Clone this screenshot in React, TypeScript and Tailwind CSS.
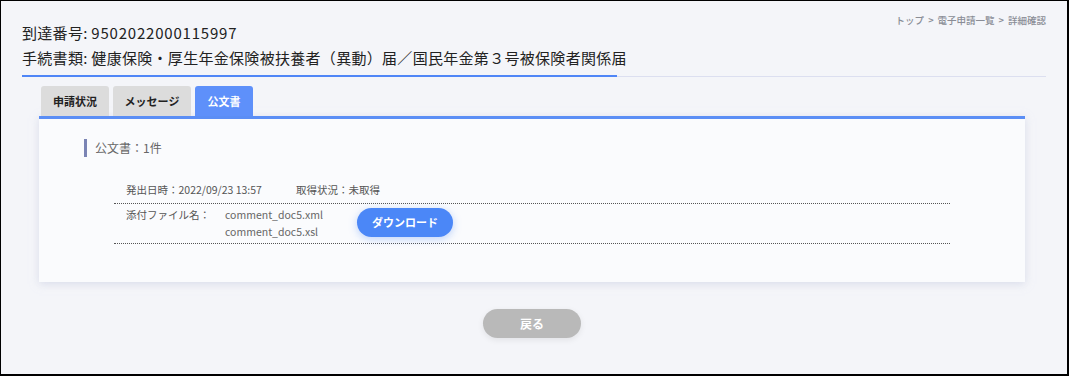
import React from 'react';

const tabs = [
  { label: '申請状況', width: 'w-[68px]', active: false },
  { label: 'メッセージ', width: 'w-[78px]', active: false },
  { label: '公文書', width: 'w-[58px]', active: true },
];

const files = ['comment_doc5.xml', 'comment_doc5.xsl'];

export default function App() {
  return (
    <div className="w-[1069px] h-[376px] overflow-hidden bg-[#f4f5f9] border-l border-t border-r-2 border-b-2 border-black font-['Noto_Sans_CJK_JP','Noto_Sans',sans-serif] text-[#222]">
      {/* header */}
      <header className="px-[21px] pt-[12px]">
        <div className="flex items-start justify-between">
          <div className="pt-[7px] text-[15px] leading-[25px] tracking-[0.3px]">
            <p>
              到達番号: <span className="tracking-[0.8px]">9502022000115997</span>
            </p>
            <p>手続書類: 健康保険・厚生年金保険被扶養者（異動）届／国民年金第３号被保険者関係届</p>
          </div>
          <nav className="flex items-center gap-[4px] text-[9.5px] leading-[14px] font-medium text-[#8a8d96]">
            <span>トップ</span>
            <span>&gt;</span>
            <span>電子申請一覧</span>
            <span>&gt;</span>
            <span>詳細確認</span>
          </nav>
        </div>
        <div className="mt-[5px] flex items-center h-[2px]">
          <div className="w-[595px] h-[2px] bg-[#4f86f7]" />
          <div className="flex-1 h-px bg-[#dcdff0]" />
        </div>
      </header>

      <main className="ml-[38px] mr-[42px] mt-[9px]">
        {/* tabs */}
        <div className="flex gap-[4px] ml-[2px]">
          {tabs.map((t) => (
            <div
              key={t.label}
              className={`${t.width} h-[30px] rounded-t-[3px] flex items-center justify-center text-[11px] font-bold ${
                t.active ? 'bg-[#5e90fa] text-white' : 'bg-[#dcdcdc] text-[#222]'
              }`}
            >
              {t.label}
            </div>
          ))}
        </div>

        {/* card */}
        <section className="bg-[#fafbfd] border-t-[3px] border-[#5b8ef5] shadow-[0_2px_8px_rgba(200,205,225,0.6)] pt-[20px] pb-[38px]">
          <div className="ml-[45px] flex items-center h-[18px] border-l-[3px] border-[#7a84b4] pl-[8px] text-[12px] text-[#666]">
            公文書：1件
          </div>

          <div className="ml-[75px] w-[836px] mt-[20px] text-[10.5px] text-[#555]">
            <div className="h-[27px] flex items-center pl-[12px] border-b border-dotted border-[#555]">
              <span className="w-[170px]">発出日時：2022/09/23 13:57</span>
              <span>取得状況：未取得</span>
            </div>
            <div className="flex items-start pl-[12px] pt-[3px] pb-[3px] border-b border-dotted border-[#555]">
              <span className="w-[99px] leading-[16.5px]">添付ファイル名：</span>
              <div className="w-[132px] text-[10.5px] leading-[16.5px] text-[#666]">
                {files.map((f) => (
                  <p key={f}>{f}</p>
                ))}
              </div>
              <button className="mt-[1px] w-[96px] h-[29px] rounded-full bg-[#4b87f7] text-white text-[11px] font-bold shadow-[0_2px_8px_rgba(75,135,247,0.35)]">
                ダウンロード
              </button>
            </div>
          </div>
        </section>

        <div className="flex justify-center mt-[27px]">
          <button className="w-[98px] h-[29px] rounded-full bg-[#b9b9b9] text-white text-[12px] font-bold shadow-[0_2px_6px_rgba(0,0,0,0.08)]">
            戻る
          </button>
        </div>
      </main>
    </div>
  );
}
